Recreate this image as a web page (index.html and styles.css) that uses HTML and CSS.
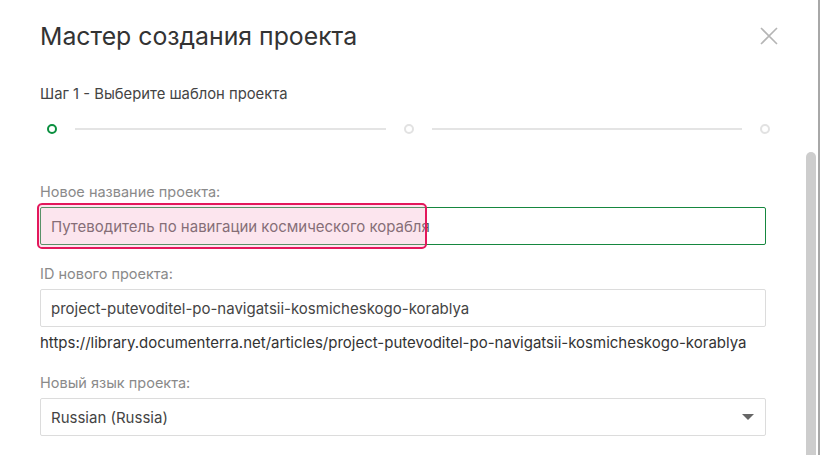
FILE: index.html
```html
<!DOCTYPE html>
<html lang="ru">
<head>
    <meta charset="UTF-8">
    <meta name="viewport" content="width=device-width, initial-scale=1.0">
    <title>Мастер создания проекта</title>
    <link rel="stylesheet" href="styles.css">
</head>
<body>
    <div class="wizard">
        <div class="wizard-content">
            <div class="wizard-header">
                <h1>Мастер создания проекта</h1>
                <button class="close-btn" aria-label="Закрыть">
                    <svg width="18" height="18" viewBox="0 0 18 18">
                        <path d="M1 1 L17 17 M17 1 L1 17" stroke="#b5b5b5" stroke-width="1.6" fill="none"/>
                    </svg>
                </button>
            </div>

            <div class="step-title">Шаг 1 - Выберите шаблон проекта</div>

            <div class="stepper">
                <span class="dot active"></span>
                <span class="line"></span>
                <span class="dot"></span>
                <span class="line"></span>
                <span class="dot"></span>
            </div>

            <div class="form-group first">
                <label for="project-name">Новое название проекта:</label>
                <div class="input-wrap">
                    <input type="text" id="project-name" class="field focused" value="Путеводитель по навигации космического корабля">
                    <div class="highlight"></div>
                </div>
            </div>

            <div class="form-group">
                <label for="project-id">ID нового проекта:</label>
                <input type="text" id="project-id" class="field" value="project-putevoditel-po-navigatsii-kosmicheskogo-korablya">
                <div class="project-url">https://library.documenterra.net/articles/project-putevoditel-po-navigatsii-kosmicheskogo-korablya</div>
            </div>

            <div class="form-group lang">
                <label for="project-lang">Новый язык проекта:</label>
                <div class="select">
                    <span>Russian (Russia)</span>
                    <span class="arrow"></span>
                </div>
            </div>
        </div>

        <div class="scrollbar">
            <div class="thumb"></div>
        </div>
    </div>
</body>
</html>
```

FILE: styles.css
```css
* {
    margin: 0;
    padding: 0;
    box-sizing: border-box;
}

body {
    width: 820px;
    height: 455px;
    overflow: hidden;
    font-family: Inter, "Noto Sans", sans-serif;
    background-color: #fff;
    color: #333;
}

.wizard {
    display: flex;
    height: 455px;
    border-right: 2px solid #a8a8a8;
}

.wizard-content {
    flex: 1;
    padding: 20px 40px 0 40px;
}

.wizard-header {
    display: flex;
    justify-content: space-between;
    align-items: center;
    height: 32px;
}

h1 {
    font-size: 24.8px;
    font-weight: 400;
    color: #333;
}

.close-btn {
    border: none;
    background: none;
    width: 18px;
    height: 18px;
    margin-right: -12px;
    cursor: pointer;
}

.step-title {
    margin-top: 33px;
    font-size: 14.8px;
    color: #444;
}

.stepper {
    display: flex;
    align-items: center;
    margin-top: 21px;
    margin-left: 7px;
    margin-right: -4px;
}

.dot {
    width: 10px;
    height: 10px;
    border-radius: 50%;
    border: 2px solid #e2e2e2;
    flex-shrink: 0;
}

.dot.active {
    border-color: #0a8f3f;
}

.line {
    flex: 1;
    height: 2px;
    background-color: #e4e4e4;
    margin: 0 18px;
}

.form-group {
    margin-top: 20px;
}

.form-group.first {
    margin-top: 49px;
}

.form-group.lang {
    margin-top: 22px;
}

label {
    display: block;
    font-size: 14.5px;
    color: #8a8a8a;
    margin-bottom: 7px;
}

.input-wrap {
    position: relative;
}

.field {
    display: block;
    width: 100%;
    height: 38px;
    padding: 0 10px;
    border: 1px solid #dcdcdc;
    border-radius: 2px;
    font-family: inherit;
    font-size: 15px;
    color: #444;
    background: #fff;
    outline: none;
}

.field.focused {
    border-color: #16873f;
    color: #555;
}

.highlight {
    position: absolute;
    left: -3px;
    top: -4px;
    width: 390px;
    height: 46px;
    border: 2px solid #e3185c;
    border-radius: 5px;
    background-color: rgba(246, 168, 200, 0.3);
    pointer-events: none;
}

.project-url {
    margin-top: 6px;
    font-size: 15px;
    color: #333;
}

.select {
    display: flex;
    align-items: center;
    justify-content: space-between;
    height: 38px;
    padding: 0 11px 0 10px;
    border: 1px solid #dcdcdc;
    border-radius: 2px;
    font-size: 15px;
    color: #444;
}

.arrow {
    width: 0;
    height: 0;
    border-left: 6px solid transparent;
    border-right: 6px solid transparent;
    border-top: 6px solid #666;
}

.scrollbar {
    width: 12px;
    position: relative;
    background-color: #fff;
}

.thumb {
    position: absolute;
    top: 152px;
    left: 0;
    width: 10px;
    bottom: 0;
    background-color: #cdcdcd;
    border-radius: 5px 5px 0 0;
}
```
